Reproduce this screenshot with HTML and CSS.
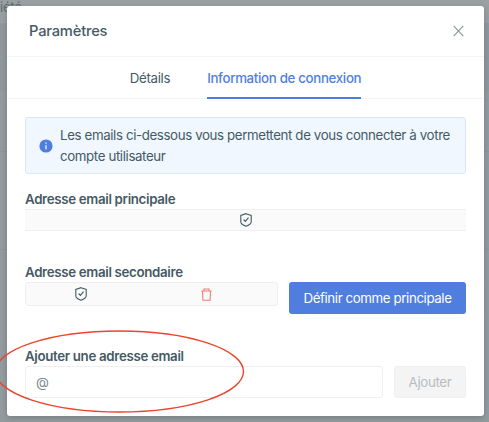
FILE: index.html
```html
<!DOCTYPE html>
<html lang="fr">
<head>
  <meta charset="UTF-8">
  <meta name="viewport" content="width=device-width, initial-scale=1">
  <title>Paramètres</title>
  <link rel="stylesheet" href="styles.css">
</head>
<body>
  <!-- Page behind the modal -->
  <div class="backdrop">
    <div class="backdrop-title">iété</div>
    <div class="backdrop-row"></div>
    <div class="backdrop-row"></div>
    <div class="backdrop-row"></div>
  </div>

  <!-- Modal -->
  <div class="modal">
    <header class="modal-header">
      <h1>Paramètres</h1>
      <button class="close" aria-label="Fermer">
        <svg width="11" height="12" viewBox="0 0 11 12"><path d="M.7.8l9.6 10.4M10.3.8L.7 11.2"/></svg>
      </button>
    </header>

    <nav class="tabs">
      <a class="tab" href="#">Détails</a>
      <a class="tab active" href="#">Information de connexion</a>
    </nav>

    <main class="modal-body">
      <div class="alert">
        <svg class="info" width="14" height="14" viewBox="0 0 14 14">
          <circle cx="7" cy="7" r="6.6"/>
          <path d="M7 6.2v4M7 3.6v1.2"/>
        </svg>
        <p>Les emails ci-dessous vous permettent de vous connecter à votre compte utilisateur</p>
      </div>

      <section class="primary">
        <h2>Adresse email principale</h2>
        <div class="email-bar">
          <svg class="shield" width="12" height="14" viewBox="0 0 12 14">
            <path d="M6 .7l5.2 1.7v6.7c0 1.5-2.3 3.1-5.2 4.2C3.100 12.200.8 10.600.8 9.100V2.400z"/>
            <path d="M3.600 6.500l1.800 1.900 3.100-3.700"/>
          </svg>
        </div>
      </section>

      <section class="secondary">
        <h2>Adresse email secondaire</h2>
        <div class="row">
          <div class="email-box">
            <svg class="shield" width="12" height="14" viewBox="0 0 12 14">
              <path d="M6 .7l5.2 1.7v6.7c0 1.5-2.3 3.1-5.2 4.2C3.100 12.200.8 10.600.8 9.100V2.400z"/>
              <path d="M3.600 6.500l1.800 1.900 3.100-3.700"/>
            </svg>
            <svg class="trash" width="11" height="13" viewBox="0 0 11 13">
              <path d="M.2 3h10.600M3 3V1h5v2M1.500 3l.4 9.200h7.200L9.500 3"/>
            </svg>
          </div>
          <button class="btn btn-primary">Définir comme principale</button>
        </div>
      </section>

      <section class="add">
        <h2>Ajouter une adresse email</h2>
        <div class="row">
          <label class="field"><span>@</span><input type="email" aria-label="Adresse email"></label>
          <button class="btn btn-add" disabled>Ajouter</button>
        </div>
      </section>
    </main>
  </div>

  <!-- Red highlight around the new address field -->
  <svg class="highlight" width="250" height="90" viewBox="0 0 250 90">
    <ellipse cx="119.500" cy="43.500" rx="124" ry="40.500"/>
  </svg>
</body>
</html>
```

FILE: styles.css
```css
*, *::before, *::after {
  margin: 0;
  padding: 0;
  box-sizing: border-box;
}
body {
  position: relative;
  width: 489px;
  height: 422px;
  overflow: hidden;
  padding: 6px 5px 6px 7px;
  font-family: Inter, sans-serif;
  font-size: 13.3px;
  letter-spacing: -0.33px;
  color: #455a64;
  background: #929b9e;
}
button, input {
  font: inherit;
  letter-spacing: inherit;
  border: none;
  background: none;
}
svg {
  display: block;
  flex: none;
  fill: none;
}
/* Page behind */
.backdrop {
  position: absolute;
  inset: 0;
  color: #626e73;
}
.backdrop-title {
  height: 23px;
  line-height: 14px;
  background: #999fa2;
}
.backdrop-row {
  height: 68px;
  background: #8f989e;
}
.backdrop-row + .backdrop-row {
  height: 61px;
  background: #929b9e;
  border-bottom: 1px solid #8b9598;
}
.backdrop-row:last-child {
  height: 98px;
}
/* Modal */
.modal {
  position: relative;
  height: 410px;
  background: #fff;
  border-radius: 3px;
  box-shadow: 0 2px 6px rgba(0, 0, 0, 0.18);
}
.modal-header {
  display: flex;
  align-items: center;
  justify-content: space-between;
  height: 51px;
  padding: 0 20px 0 22px;
  border-bottom: 1px solid #f3f4f4;
}
.modal-header h1 {
  font-size: 14.7px;
  font-weight: 500;
  letter-spacing: -0.2px;
  line-height: 50px;
}
.close svg {
  stroke: #8f9a9e;
  stroke-width: 1.2;
}
/* Tabs */
.tabs {
  display: flex;
  justify-content: center;
  gap: 37px;
  height: 42px;
  border-bottom: 1px solid #f3f4f4;
}
.tab {
  height: 42px;
  line-height: 42px;
  color: inherit;
  text-decoration: none;
}
.tab.active {
  color: #507edf;
  font-weight: 500;
  border-bottom: 2px solid #507edf;
}
/* Content */
.modal-body {
  padding: 18px 18px 0;
}
.alert {
  display: flex;
  align-items: center;
  gap: 7px;
  height: 57px;
  padding: 0 12px 0 13px;
  line-height: 20.500px;
  letter-spacing: -0.38px;
  background: #f0f7ff;
  border: 1px solid #d9e7fd;
  border-radius: 3px;
}
.info circle {
  fill: #507edf;
}
.info path {
  stroke: #fff;
  stroke-width: 1.2;
}
h2 {
  height: 20px;
  line-height: 20px;
  font-size: 13.3px;
  font-weight: 600;
  white-space: nowrap;
}
.primary {
  margin-top: 15px;
}
.email-bar {
  display: flex;
  align-items: center;
  justify-content: center;
  height: 22px;
  background: #fafafa;
  border: solid #eeefef;
  border-width: 1px 0;
}
.shield {
  stroke: #455a64;
  stroke-width: 1.1;
}
.trash {
  stroke: #f17c76;
  stroke-width: 1.1;
}
.secondary {
  margin-top: 31px;
}
.row {
  display: flex;
  align-items: flex-start;
  gap: 11px;
}
.email-box {
  display: grid;
  grid-template-columns: 110px 140px;
  align-items: center;
  justify-items: center;
  flex: 1;
  height: 24px;
  background: #fafafa;
  border: 1px solid #eeefef;
  border-radius: 3px;
}
.btn {
  height: 32px;
  border-radius: 3px;
  white-space: nowrap;
}
.btn-primary {
  width: 177px;
  color: #fff;
  letter-spacing: -0.4px;
  background: #507edf;
}
.add {
  margin-top: 32px;
}
.field {
  display: flex;
  align-items: center;
  flex: 1;
  height: 32px;
  padding: 0 10px;
  color: #7c888d;
  border: 1px solid #eeefef;
  border-radius: 3px;
}
.field input {
  flex: 1;
  min-width: 0;
}
.btn-add {
  width: 72px;
  color: #b8bcbe;
  background: #f4f4f4;
  border: 1px solid #eeefef;
}
/* Highlight */
.highlight {
  position: absolute;
  left: 0;
  top: 328px;
}
.highlight ellipse {
  stroke: #e9452f;
  stroke-width: 1.4;
}
```
